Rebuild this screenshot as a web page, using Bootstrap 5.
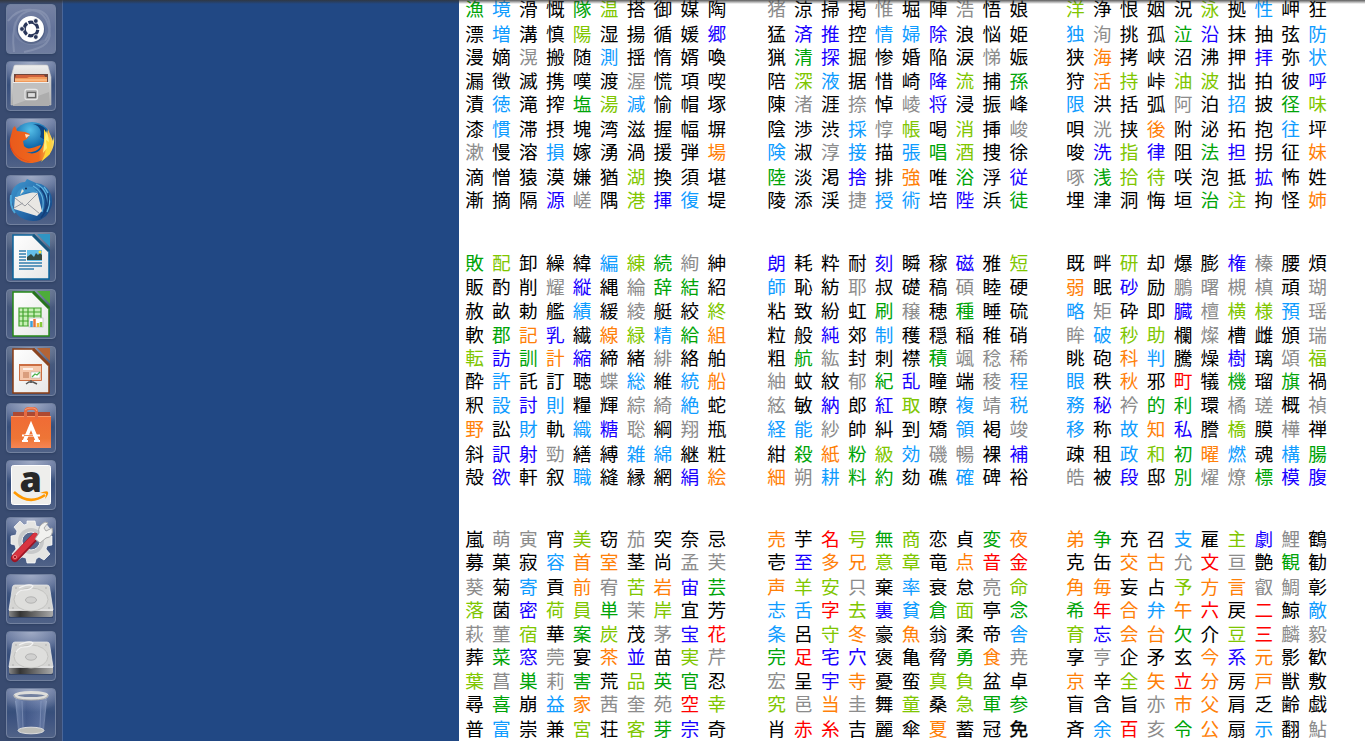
<!DOCTYPE html>
<html lang="ja">
<head>
<meta charset="utf-8">
<meta name="viewport" content="width=device-width, initial-scale=1">
<title>Desktop</title>
<link href="https://cdn.jsdelivr.net/npm/bootstrap@5.3.0/dist/css/bootstrap.min.css" rel="stylesheet">
<style>
body{background:#214884;font-family:"Noto Sans CJK JP","Liberation Sans",sans-serif;height:741px}
.launcher{width:63px;background:#394b70;border-right:1px solid #4a6698;padding:4px 0 0 6px;gap:7px}
.tile{width:50px;height:50px;flex:none;border-radius:4px;border:1px solid #72819f;
 background:radial-gradient(ellipse 75% 48% at 50% 0,#a0abc5 0,#78879f00 100%),linear-gradient(#60719a,#374f7b 48%,#3d5380 62%,#506287);
 box-shadow:0 1px 2px #26365788}
.tile.dash{background:linear-gradient(#7682a3,#64739a 50%,#707d9f)}
.tile.app{background:radial-gradient(ellipse 75% 45% at 50% 0,#8995ae 0,#78879f00 100%),linear-gradient(#50617f,#42557c 50%,#506287)}
.tile svg{display:block;width:50px;height:50px;margin:-1px}
.wall{width:396px}
.paper{background:#fff;padding-left:2px}
.kanji{display:grid;grid-template-columns:repeat(10,26.93px);font-size:18.67px;line-height:24px;text-align:center}
.kanji span{display:block;height:24px;white-space:nowrap}
.mid{margin-left:32.8px;margin-right:29.6px}
.r1 .kanji{grid-template-rows:25px 23px 24px 23px 25px 23px 25px 23px 24px}
.r2 .kanji{grid-template-rows:24px 24px 24px 23px 23px 24px 24px 25px 23px 24px}
.r3 .kanji{grid-template-rows:23px 25px 23px 24px 23px 24px 23px 25px 24px}
.r1{margin-top:-4px}.r2{margin-top:39px}.r3{margin-top:38px}
.k{color:#000}.g{color:#8c8c8c}.b{color:#1800ff}.s{color:#109cff}.n{color:#00a408}.l{color:#80c600}.o{color:#ff8008}.r{color:#f00}
.heavy{-webkit-text-stroke:.4px #000}
.topshade{height:4px;background:linear-gradient(#333c,#3330);z-index:2}
</style>
<script src="https://cdn.jsdelivr.net/npm/bootstrap@5.3.0/dist/js/bootstrap.bundle.min.js"></script>
</head>
<body class="d-flex overflow-hidden position-relative">
<div class="topshade position-absolute top-0 start-0 w-100"></div>
<svg width="0" height="0" class="position-absolute" aria-hidden="true"><defs>
<linearGradient id="steel" x2="0" y2="1"><stop stop-color="#eee"/><stop offset="1" stop-color="#aaa"/></linearGradient>
<linearGradient id="page" x2="1" y2="1"><stop stop-color="#fff"/><stop offset="1" stop-color="#e7e7e7"/></linearGradient>
<linearGradient id="bag" x2="0" y2="1"><stop stop-color="#f06b35"/><stop offset=".7" stop-color="#ee7536"/><stop offset="1" stop-color="#f58655"/></linearGradient>
<linearGradient id="fox" x2="1" y2="0"><stop stop-color="#e95a1c"/><stop offset=".65" stop-color="#f0681c"/><stop offset="1" stop-color="#fce45c"/></linearGradient>
<radialGradient id="globe" cx=".45" cy=".2"><stop stop-color="#55bfe8"/><stop offset="1" stop-color="#075ba2"/></radialGradient>
<linearGradient id="bird" x2="1" y2="1"><stop stop-color="#3f98cf"/><stop offset=".6" stop-color="#2367a8"/><stop offset="1" stop-color="#123a75"/></linearGradient>
<linearGradient id="edge" x2="1" y2="0"><stop stop-color="#888"/><stop offset=".25" stop-color="#343434"/><stop offset="1" stop-color="#aaa"/></linearGradient>
<linearGradient id="bin" x2="1" y2="0"><stop stop-color="#8ca0c5" stop-opacity=".65"/><stop offset=".35" stop-color="#4b6194" stop-opacity=".5"/><stop offset=".8" stop-color="#7185b4" stop-opacity=".5"/><stop offset="1" stop-color="#a1afce" stop-opacity=".5"/></linearGradient>
<g id="disk"><path d="M3 42h44v2H3z" fill="#1d2c4a" opacity=".5"/><path d="M9 11h32q2 0 2.500 2l3.500 23H3L6.500 13q.5-2 2.500-2z" fill="#d5d5d3" stroke="#eee" stroke-width=".7"/><path d="M3 36h44v5q0 2-2 2H5q-2 0-2-2z" fill="url(#edge)"/><path d="M3 36.300h44" stroke="#f5f5f5"/><ellipse cx="25" cy="25.500" rx="17" ry="11.500" fill="#dededc" stroke="#bcbcba" stroke-width=".8"/><ellipse cx="25" cy="26" rx="5.500" ry="3.200" fill="#d0d0cf" stroke="#aaa" stroke-width=".8"/><path d="M13 14q10-5 14-2-2 4-9 4-5 0-8 5" fill="none" stroke="#f3f3f3" stroke-width="1.200"/><g fill="#aaa"><circle cx="10" cy="14" r=".8"/><circle cx="40" cy="14" r=".8"/><circle cx="7" cy="34" r=".8"/><circle cx="43" cy="34" r=".8"/></g></g>
</defs></svg>

<nav class="launcher d-flex flex-column h-100 flex-shrink-0" aria-label="Launcher">
 <div class="tile dash"><svg viewBox="0 0 50 50"><g fill="none" stroke="#a9b3ca" opacity=".35" stroke-width="2"><path d="M8 48C5 23 10 8 27 6c20 0 19 21 12 31" /><path d="M2 17C14 1 36 2 42 20s-3 24-24 28"/><path d="M10 18c-6 14 8 27 29 19" stroke-width="3" opacity=".5"/></g><circle cx="25" cy="26" r="14" fill="#2b3b62" opacity=".35"/><circle cx="25" cy="25" r="13" fill="#fff"/><circle cx="25" cy="25" r="6.800" fill="none" stroke="#29365a" stroke-width="3.200" stroke-dasharray="12.740 1.500" stroke-dashoffset="-.75"/><g fill="#29365a" stroke="#fff" stroke-width=".8"><circle cx="16" cy="25" r="2.400"/><circle cx="29.800" cy="17" r="2.400"/><circle cx="29.800" cy="33" r="2.400"/></g></svg></div>
 <div class="tile"><svg viewBox="0 0 50 50"><path d="M8 5q0-1 2-1h30q2 0 2 1l3 11v28H5V16z" fill="url(#steel)" stroke="#c8c8c8" stroke-width=".6"/><path d="M8 13h34v9H8z" fill="#70463c"/><path d="M10 14h28l2 3H9z" fill="#d0623c"/><path d="M9 17h12l2-1h18v6H9z" fill="#f19a5b"/><path d="M9 19h32" stroke="#ffd2a2"/><path d="M7 21h36v24H7z" fill="#adadad"/><path d="M7 21h36v10L7 44z" fill="#c0c0c0"/><path d="M7 21.500h36" stroke="#eee"/><rect x="19" y="28.500" width="12.500" height="10" rx="2" fill="#aaa" stroke="#e5e5e5" stroke-width="1.300"/><rect x="21.500" y="31.500" width="8" height="5" fill="#ddd" stroke="#656565" stroke-width="1.200"/></svg></div>
 <div class="tile"><svg viewBox="0 0 50 50"><circle cx="26" cy="24" r="20" fill="url(#globe)"/><path d="M27 6c8 2 9 9 7 13l5 3 3-7c-3-6-7-9-15-9z" fill="#0d437f"/><path d="M7 10l2-2 2 5 8 1 5 2-3 5-4 2 1 5c4 5 10 1 17-1-2 6-9 8-15 7 11 5 20-4 18-19l3 5 1-9 5 12 1-5c2 18-11 27-24 27C12 45 2 33 4 21z" fill="url(#fox)"/><path d="M38 11l7 12-1 13-9 8c5-8 6-14 3-22z" fill="#ffd638"/><path d="M41 12l2 12-3-2 1 8-4 5 2-16z" fill="#fff077"/><path d="M19 16l5 1-4 3z" fill="#ffe3c4"/><path d="M4 23c1 11 8 18 21 21-9-1-17-7-21-15z" fill="#d9411b"/></svg></div>
 <div class="tile"><svg viewBox="0 0 50 50"><path d="M5 24C4 13 12 7 19 7l2-3 9 4 5 1c9 4 12 12 11 21l-3 7-3 4-6 4c-10 3-21-1-25-9z" fill="url(#bird)"/><path d="M30 9c10 4 13 14 10 26M27 11c9 5 12 14 9 26M38 12c6 7 7 16 3 25" fill="none" stroke="#62b3de" stroke-width="1.200"/><path d="M34 13c7 8 8 16 4 25M42 18c2 9 0 16-7 25" fill="none" stroke="#143e78" stroke-width="1.500"/><path d="M9 22l22-6 5 20-5 5L8 34z" fill="#e9e7e3"/><path d="M9 23l10 8 13-13M8 33l9-5m5 1l12 10" fill="none" stroke="#9b9da2" stroke-width="1"/><path d="M10 22c1-8 8-12 17-10l5 6-9-1c-4 0-6 3-13 5z" fill="#3c91c9"/><path d="M16 14l-2 6 4-4z" fill="#ece6d7"/><circle cx="20" cy="13.500" r="1" fill="#12284c"/><path d="M5 20c-1 8 1 14 4 18" fill="none" stroke="#4ba5d8" stroke-width="2"/></svg></div>
 <div class="tile app"><svg viewBox="0 0 50 50"><path d="M7 3h21l15 16v28H7z" fill="url(#page)" stroke="#0b639b" stroke-width="1.500"/><path d="M27 3l16 16" stroke="#14567f" stroke-width="3"/><path d="M31 2h13v13z" fill="#2f94c4"/><g stroke="#327ead" stroke-width="1.500"><path d="M13 19h7m-7 3h7m-7 3h7m-7 3h7m-7 3h23m-23 3h23m-23 3h15" /></g><rect x="21" y="18" width="15" height="11" fill="#64bee8"/><path d="M21 25l4-3 3 3 2-4 2 2 2-2 2 2v5H21z" fill="#344941"/><circle cx="34" cy="20" r="1.500" fill="#fcdf35"/></svg></div>
 <div class="tile app"><svg viewBox="0 0 50 50"><path d="M7 3h21l15 16v28H7z" fill="url(#page)" stroke="#268818" stroke-width="1.500"/><path d="M27 3l16 16" stroke="#27741c" stroke-width="3"/><path d="M31 2h13v13z" fill="#4dac3a"/><rect x="13" y="19" width="22" height="18" fill="#c7efb6"/><path d="M13 19h22v18H13zM13 23h22M13 27h22M13 32h22M17 19v18M22 19v18M28 19v18" fill="none" stroke="#42a42d" stroke-width="1.200"/><rect x="23" y="29" width="14" height="9" fill="#fff" stroke="#bbb" stroke-width=".7"/><path d="M25.500 38v-6" stroke="#3c9eda" stroke-width="2.500"/><path d="M28.500 38v-8" stroke="#e7743c" stroke-width="2.500"/><path d="M32 38v-4" stroke="#efb936" stroke-width="2.500"/><path d="M35 38v-5" stroke="#86c93b" stroke-width="2.500"/></svg></div>
 <div class="tile app"><svg viewBox="0 0 50 50"><path d="M7 3h21l15 16v28H7z" fill="url(#page)" stroke="#8b3c13" stroke-width="1.500"/><path d="M27 3l16 16" stroke="#8b431e" stroke-width="3"/><path d="M31 2h13v13z" fill="#b36436"/><path d="M13.500 18.500h22v16h-22z" fill="#f5c8ac" stroke="#cb6d42"/><path d="M13 19h23" stroke="#cb6d42" stroke-width="2"/><path d="M17 23h10" stroke="#fff" stroke-width="1.500"/><path d="M17 27h6m-6 2h6m-6 2h6" stroke="#be744e" stroke-width="1.200"/><path d="M25 26h9v6h-9z" fill="#fff" stroke="#aaa" stroke-width=".5"/><path d="M26 31l3-3 2 1 3-3" fill="none" stroke="#4ab14d" stroke-width="1.200"/><path d="M20 38l3-2h4l4 2M25 34v3" fill="none" stroke="#555" stroke-width="1.500"/></svg></div>
 <div class="tile"><svg viewBox="0 0 50 50"><path d="M7 9h37v7H7z" fill="#ae4931"/><path d="M5 13h40v32H5z" fill="url(#bag)"/><path d="M5 13.500h40" stroke="#f99a6b"/><path d="M19.500 16V9q0-3.500 3.500-3.500h4q3.500 0 3.500 3.500v7" fill="none" stroke="#e56b42" stroke-width="3"/><path d="M19 7q2-2 5-2h3q3 0 4 3" fill="none" stroke="#fa9e77"/><path d="M18.500 38L25 22.500 31.500 38" fill="none" stroke="#fff" stroke-width="3.600"/><path d="M16 32.500h18M16 38h6m6 0h6" stroke="#fff" stroke-width="2"/><path d="M18 32.500h9" stroke="#f38b56"/></svg></div>
 <div class="tile"><svg viewBox="0 0 50 50"><rect x="5.500" y="5.500" width="39" height="39" rx="2" fill="#eeeeec" stroke="#fff"/><text x="24.700" y="32" text-anchor="middle" font-family="Open Sans,sans-serif" font-weight="800" font-size="36" fill="#282828">a</text><path d="M8 32q15 14 31 3" fill="none" stroke="#ff9800" stroke-width="2.500"/><path d="M34 33q7-3 8-1 1 2-3 7 1-4 1-5-1-1-6-1z" fill="#ff9800"/></svg></div>
 <div class="tile"><svg viewBox="0 0 50 50"><path d="M21 4h8l1 5 4 1 5-4 5 6-3 5 1 2h4v9l-5 1-1 3 4 5-6 6-5-3-3 2-1 4h-8l-1-5-4-1-4 3-6-6 4-5-1-4-4-1v-8l5-1 1-4-3-4 6-6 4 4 3-1z" fill="#e5e5e3" stroke="#fff" stroke-width=".7"/><circle cx="25" cy="24" r="13" fill="#c8c9ca"/><circle cx="25" cy="24" r="9" fill="#58698e" stroke="#eee"/><path d="M29 20L9 41" stroke="#9b1525" stroke-width="8" stroke-linecap="round"/><path d="M29 19L9 40" stroke="#d83440" stroke-width="6" stroke-linecap="round"/><path d="M29 22l4-6q-2-7 6-11l3 1-4 5 2 3 6-3q2 9-6 10l-6 5z" fill="#f1f1ef" stroke="#aaa"/><circle cx="9" cy="40" r="1.700" fill="#9d1d28" stroke="#eb7c80"/></svg></div>
 <div class="tile"><svg viewBox="0 0 50 50"><use href="#disk"/></svg></div>
 <div class="tile"><svg viewBox="0 0 50 50"><use href="#disk"/></svg></div>
 <div class="tile"><svg viewBox="0 0 50 50"><path d="M9 9h32l-4 34q-12 5-24 0z" fill="url(#bin)"/><path d="M16 13l1 27M35 13l-1 27M9.500 13l3 29M40.500 13l-3 29" fill="none" stroke="#a7b6d8" opacity=".4"/><ellipse cx="25" cy="42.500" rx="13" ry="3.300" fill="#bcbdb9" stroke="#ddd"/><ellipse cx="25" cy="7.500" rx="16" ry="3" fill="#7381a0" stroke="#dededb" stroke-width="3"/><path d="M8 7q0 5 17 5T42 7" fill="none" stroke="#aaa" stroke-width="1"/></svg></div>
</nav>
<div class="wall flex-shrink-0"></div>
<main class="paper flex-grow-1 h-100 overflow-hidden" id="paper"></main>

<script>
// Each row is "characters colours", one colour letter per character.
const bands = [[
`漁境滑慨隊温搭御媒陶 nskknlkkkk
漂増溝慎陽湿揚循媛郷 kskklkkkkb
漫嫡滉搬随測揺惰婿喚 kkgkkskkkk
漏徴滅携嘆渡渥慌項喫 kkkkkkgkkk
漬徳滝搾塩湯減愉帽塚 kskknlskkk
漆慣滞摂塊湾滋握幅塀 kskkkkkkkk
漱慢溶損嫁湧渦援弾場 gkkskkkkko
滴憎猿漠嫌猶湖換須堪 kkkkkklkkk
漸摘隔源嵯隅港揮復堤 kkkbgklbsk`,
`猪涼掃掲惟堀陣浩悟娘 gkkkgkkgkk
猛済推控情婦除浪悩姫 kbbkssbkkk
猟清探掘惨婚陥涙悌娠 knbkkkkkgk
陪深液据惜崎降流捕孫 klskkkblkn
陳渚涯捺悼崚将浸振峰 kgkgkgbkkk
陰渉渋採惇帳喝消挿峻 kkksglklkg
険淑淳接描張唱酒捜徐 skgsksnlkk
陸淡渇捨排強唯浴浮従 nkkbkoknkb
陵添渓捷授術培陛浜徒 kkkgsskbkn`,
`洋浄恨姻況泳拠性岬狂 lkkkklkskk
独洵挑孤泣沿抹抽弦防 sgkknbkkks
狭海拷峡沼沸押拝弥状 kokkkkkbks
狩活持峠油波拙拍彼呼 kolkllkkkb
限洪括弧阿泊招披径味 skkkgksknl
唄洸挟後附泌拓抱往坪 kgkokkkksk
唆洗指律阻法担拐征妹 kblbknbkko
啄浅拾待咲泡抵拡怖姓 gnllkkkbkk
埋津洞悔垣治注拘怪姉 kkkkknlkko`],[
`敗配卸繰緯編練続絢紳 nlkkkslngk
販酌削耀縦縄綸辞結紹 kkkgbkgnnk
赦畝勅艦績緩綾艇絞終 kkkkskgkkl
軟郡記乳繊線緑精給組 knobkolsno
転訪訓計縮締緒緋絡舶 lbnobkkgkk
酔許託訂聴蝶総維統船 kskkkgskso
釈設討則糧輝綜綺絶蛇 ksbskkggsk
野訟財軌織糖聡綱翔瓶 oksksbgkgk
斜訳射勁繕縛雑綿継粧 kbbgkksskk
殻欲軒叙職縫縁網絹絵 kbkkskkkbo`,
`朗耗粋耐刻瞬稼磁雅短 bkkkbkkbkl
師恥紡耶叔礎稿碩睦硬 skkgkkkgkk
粘致紛虹刷穣穂種睡硫 kkkkngknkk
粒般純郊制穫穏稲稚硝 kkbkskkkkk
粗航紘封刺襟積颯稔稀 kngkkknggg
紬蚊紋郁紀乱瞳端稜程 gkkgnbkkgs
絃敏納郎紅取瞭複靖税 gkbkblksgs
経能紗帥糾到矯領褐竣 ssgkkkkskg
紺殺紙粉級効磯暢裸補 knonlsggkb
細朔耕料約劾礁確碑裕 ogsnnkkskk`,
`既畔研却爆膨権榛腰煩 kklkkkbgkk
弱眠砂励鵬曙槻槙頑瑚 okbkggggkg
略矩砕即臓檀横様預瑶 sgkkbgllsg
眸破秒助欄燦槽雌頒瑞 gsllkgkkkg
眺砲科判騰燥樹璃頌福 kkoskkbkgl
眼秩秋邪町犠機瑠旗禍 skokrknknk
務秘衿的利環橘瑳概禎 sbgnnkggkg
移称故知私謄橋膜樺禅 sksobklkgk
疎租政和初曜燃魂構腸 kkslnosksn
皓被段邸別燿燎標模腹 gkbknggnbb`],[
`嵐萌寅宵美窃茄突奈忌 kggklkgkkk
募菓寂容首室茎尚孟芙 kkksookkgg
葵菊寄貢前宥苦岩宙芸 gkskoglobn
落菌密荷員単茉岸宜芳 lkbllnglkk
萩菫宿華案炭茂茅宝花 gglknlkgbr
葬菜窓莞宴茶並苗実芹 knbgkobklg
葉菖巣莉害荒品英官忍 lgngnklnnk
尋喜崩益家茜奎苑空幸 knksogggrl
普富崇兼宮荘客芽宗奇 kskklklnbk`,
`売芋名号無商恋貞変夜 okrlnlkkno
壱至多兄意章竜点音金 kboollkorr
声羊安只棄率衰怠亮命 ollgkskkgl
志舌字去裏貧倉面亭念 ssrlbsnlkn
条呂守冬豪魚翁柔帝舎 sklokokkks
完足宅穴褒亀脅勇食尭 nrbbkkknog
宏呈宇寺憂蛮真負盆卓 gkbokkllkk
究邑当圭舞童桑急軍参 lgogklklnn
肖赤糸吉麗傘夏蓄冠免 krrkkkokkk`,
`弟争充召支雇主劇鯉鶴 onkksklbgk
克缶交古允文亘艶観勧 kkoogrgknk
角毎妄占予方言叡鯛彰 ookklooggk
希年合弁午六戻二鯨敵 nrosorkrks
育忘会台欠介豆三麟毅 lboonklrgg
享亨企矛玄今系元影歓 kgkkkobokk
京辛全矢立分房戸獣敷 oklorokokk
盲含旨亦市父肩乏齢戯 kkkgookkkk
斉余百亥令公扇示翻鮎 ksrgnokskg`]];
document.getElementById('paper').innerHTML = bands.map((band, i) =>
  `<section class="r${i+1} d-flex">` + band.map((grid, j) =>
    `<div class="kanji${j === 1 ? ' mid' : ''}">` + grid.split('\n').map(row => {
      const [chars, colours] = row.split(' ');
      return [...chars].map((c, n) => `<span class="${colours[n]}${c === '免' ? ' heavy' : ''}">${c}</span>`).join('');
    }).join('') + '</div>').join('') + '</section>').join('');
</script>
</body>
</html>
